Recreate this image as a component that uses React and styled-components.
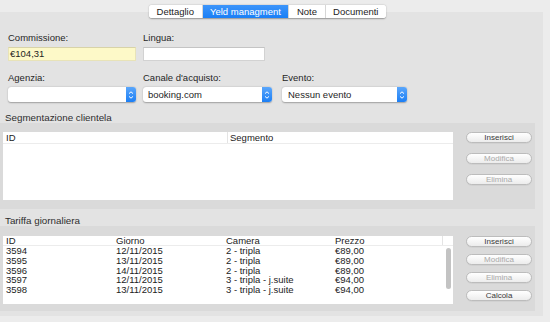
import React from "react";
import styled, { createGlobalStyle } from "styled-components";

const Global = createGlobalStyle`
  html, body {
    margin: 0;
    padding: 0;
    background: #ececec;
  }
  body {
    font-family: "Liberation Sans", Arial, sans-serif;
    font-size: 9.5px;
    color: #222;
  }
`;

const Window = styled.div`
  width: 550px;
  height: 322px;
  padding-top: 12px;
  box-sizing: border-box;
  overflow: hidden;
`;

const Panel = styled.div`
  width: 543px;
  height: 304px;
  background: #e3e3e3;
  display: flex;
  flex-direction: column;
`;

const TabStrip = styled.div`
  display: flex;
  justify-content: center;
  margin-top: -7px;
  padding-right: 8px;
`;

const TabGroup = styled.div`
  display: flex;
  height: 13px;
  background: #fff;
  border-radius: 3px;
  box-shadow: 0 0.5px 1.5px rgba(0, 0, 0, 0.35);
  overflow: hidden;
`;

const Tab = styled.div`
  padding: 0 7.5px;
  line-height: 13px;
  font-size: 9.5px;
  color: ${(p) => (p.$active ? "#fff" : "#1c1c1c")};
  background: ${(p) => (p.$active ? "linear-gradient(#3d95fa, #1a7ff6)" : "#fff")};
  border-left: 1px solid ${(p) => (p.$first ? "transparent" : "#d6d6d6")};
  &:first-child {
    border-left: none;
  }
`;

const Form = styled.div`
  padding: 14px 0 0 8px;
  display: flex;
  flex-direction: column;
  gap: 11px;
`;

const Row = styled.div`
  display: flex;
`;

const Field = styled.div`
  display: flex;
  flex-direction: column;
  width: ${(p) => p.$w}px;
  margin-right: ${(p) => p.$gap || 0}px;
`;

const Label = styled.div`
  line-height: 11px;
  height: 11px;
  margin-bottom: 4px;
  font-size: 9.5px;
  color: #262626;
`;

const Input = styled.div`
  height: 14px;
  box-sizing: border-box;
  background: ${(p) => (p.$yellow ? "#fdf9c8" : "#fff")};
  border: 1px solid ${(p) => (p.$yellow ? "#e8e3b8" : "#d2d2d2")};
  border-top-color: ${(p) => (p.$yellow ? "#d8d3a8" : "#c4c4c4")};
  padding-left: 1px;
  line-height: 12px;
  font-size: 9.5px;
  color: #1e1e1e;
`;

const Select = styled.div`
  height: 15px;
  display: flex;
  background: #fff;
  border-radius: 3px;
  box-shadow: 0 0.5px 1.5px rgba(0, 0, 0, 0.3);
  overflow: hidden;
`;

const SelectText = styled.div`
  flex: 1;
  padding-left: ${(p) => p.$pad || 5}px;
  line-height: 15px;
  font-size: 9.5px;
  color: #1e1e1e;
`;

const Stepper = styled.div`
  width: 10px;
  display: flex;
  align-items: center;
  justify-content: center;
  background: linear-gradient(#5aa6fb, #1c7ff5);
`;

const SectionTitle = styled.div`
  padding: ${(p) => p.$top}px 0 0 5px;
  line-height: 11px;
  font-size: 9.8px;
  color: #2e2e2e;
`;

const Box = styled.div`
  width: 535px;
  box-sizing: border-box;
  background: #dadada;
  display: flex;
  align-items: flex-start;
  padding: ${(p) => p.$pad};
`;

const Table = styled.div`
  width: 450px;
  height: 68px;
  background: #fff;
  position: relative;
  overflow: hidden;
`;

const HeadRow = styled.div`
  display: flex;
  height: ${(p) => p.$h}px;
  border-bottom: 1px solid #ececec;
  box-sizing: border-box;
`;

const BodyRow = styled.div`
  display: flex;
  height: 9.8px;
`;

const Cell = styled.div`
  width: ${(p) => p.$w}px;
  padding-left: ${(p) => p.$pl || 3}px;
  box-sizing: border-box;
  line-height: ${(p) => p.$lh || 10}px;
  font-size: 9.5px;
  color: #1c1c1c;
  white-space: nowrap;
  border-right: ${(p) => (p.$sep ? "1px solid #e4e4e4" : "none")};
`;

const Scroller = styled.div`
  position: absolute;
  left: 443px;
  top: 12px;
  width: 5px;
  height: 41px;
  border-radius: 3px;
  background: #c3c3c3;
`;

const Buttons = styled.div`
  display: flex;
  flex-direction: column;
  gap: ${(p) => p.$gap}px;
  margin-left: 13px;
`;

const Button = styled.div`
  width: 66px;
  height: 11px;
  box-sizing: border-box;
  border-radius: 6px;
  border: 1px solid #bcbcbc;
  background: linear-gradient(#ffffff, #ececec);
  text-align: center;
  line-height: 9px;
  font-size: 8px;
  color: ${(p) => (p.$disabled ? "#a9a9a9" : "#3a3a3a")};
  box-shadow: 0 0.5px 0.5px rgba(0, 0, 0, 0.08);
`;

const Arrows = () => (
  <svg width="6" height="10" viewBox="0 0 6 10">
    <path d="M1 3.6 L3 1.8 L5 3.6 M1 6.4 L3 8.2 L5 6.4" fill="none" stroke="#fff" strokeWidth="1" />
  </svg>
);

const Dropdown = ({ value, pad }) => (
  <Select>
    <SelectText $pad={pad}>{value}</SelectText>
    <Stepper>
      <Arrows />
    </Stepper>
  </Select>
);

const rates = [
  ["3594", "12/11/2015", "2 - tripla", "€89,00"],
  ["3595", "13/11/2015", "2 - tripla", "€89,00"],
  ["3596", "14/11/2015", "2 - tripla", "€89,00"],
  ["3597", "12/11/2015", "3 - tripla - j.suite", "€94,00"],
  ["3598", "13/11/2015", "3 - tripla - j.suite", "€94,00"],
];

export default function App() {
  return (
    <Window>
      <Global />
      <Panel>
        <TabStrip>
          <TabGroup>
            <Tab>Dettaglio</Tab>
            <Tab $active>Yeld managment</Tab>
            <Tab>Note</Tab>
            <Tab>Documenti</Tab>
          </TabGroup>
        </TabStrip>

        <Form>
          <Row>
            <Field $w={128} $gap={7}>
              <Label>Commissione:</Label>
              <Input $yellow>€104,31</Input>
            </Field>
            <Field $w={122}>
              <Label>Lingua:</Label>
              <Input />
            </Field>
          </Row>
          <Row>
            <Field $w={128} $gap={7}>
              <Label>Agenzia:</Label>
              <Dropdown value="" />
            </Field>
            <Field $w={129} $gap={10}>
              <Label>Canale d'acquisto:</Label>
              <Dropdown value="booking.com" />
            </Field>
            <Field $w={125}>
              <Label>Evento:</Label>
              <Dropdown value="Nessun evento" pad={6} />
            </Field>
          </Row>
        </Form>

        <SectionTitle $top={10}>Segmentazione clientela</SectionTitle>
        <Box $pad="9px 3px 9px 3px" style={{ height: 86 }}>
          <Table>
            <HeadRow $h={12}>
              <Cell $w={225} $sep $lh={11}>ID</Cell>
              <Cell $w={225} $lh={11} $pl={2}>Segmento</Cell>
            </HeadRow>
          </Table>
          <Buttons $gap={10}>
            <Button>Inserisci</Button>
            <Button $disabled>Modifica</Button>
            <Button $disabled>Elimina</Button>
          </Buttons>
        </Box>

        <SectionTitle $top={6}>Tariffa giornaliera</SectionTitle>
        <Box $pad="10px 3px 7px 3px" style={{ height: 85 }}>
          <Table>
            <HeadRow $h={10}>
              <Cell $w={110}>ID</Cell>
              <Cell $w={110}>Giorno</Cell>
              <Cell $w={109}>Camera</Cell>
              <Cell $w={111} $sep>Prezzo</Cell>
            </HeadRow>
            {rates.map((r) => (
              <BodyRow key={r[0]}>
                <Cell $w={110}>{r[0]}</Cell>
                <Cell $w={110}>{r[1]}</Cell>
                <Cell $w={109}>{r[2]}</Cell>
                <Cell $w={111}>{r[3]}</Cell>
              </BodyRow>
            ))}
            <Scroller />
          </Table>
          <Buttons $gap={7}>
            <Button>Inserisci</Button>
            <Button $disabled>Modifica</Button>
            <Button $disabled>Elimina</Button>
            <Button>Calcola</Button>
          </Buttons>
        </Box>
      </Panel>
    </Window>
  );
}
